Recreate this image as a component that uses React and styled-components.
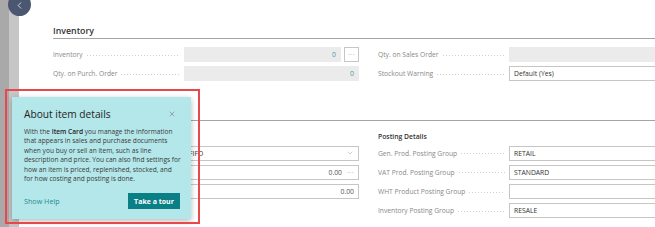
import React from 'react'
import styled, { createGlobalStyle } from 'styled-components'
import { ChevronLeft, ChevronDown, X } from 'lucide-react'

const GlobalStyle = createGlobalStyle`
  html, body { margin: 0; padding: 0; background: #fff; }
  * { box-sizing: border-box; }
`

const Frame = styled.div`
  position: relative;
  width: 655px;
  height: 227px;
  display: flex;
  overflow: hidden;
  font-family: "Open Sans", "Noto Sans", sans-serif;
  color: #333;
`

const Rail = styled.div`
  flex: none;
  width: 19px;
  background: linear-gradient(to right, #a9a9a9 0 9px, #c6c6c6 9px 19px);
`

const Page = styled.main`
  flex: 1;
  min-width: 0;
  background: #fff;
  padding: 24px 0 0 34px;
`

const BackButton = styled.button`
  position: absolute;
  left: 8px;
  top: -7px;
  width: 23px;
  height: 23px;
  border: none;
  border-radius: 50%;
  background: #4b5670;
  color: #fff;
  display: flex;
  align-items: center;
  justify-content: center;
  padding: 1px 0 0 0;
`

const TabHeader = styled.h2`
  margin: ${p => p.$gap || 0}px 0 0;
  height: 15px;
  line-height: 14px;
  font-size: 8.8px;
  font-weight: 600;
  color: #333;
  border-bottom: 1px solid #a4a4a4;
  white-space: nowrap;
`

const Grid = styled.div`
  display: grid;
  grid-template-columns: 306px 306px;
  column-gap: 19px;
  margin-top: ${p => p.$top}px;
`

const Column = styled.div`
  display: flex;
  flex-direction: column;
  gap: 4.3px;
`

const GroupTitle = styled.div`
  height: 10px;
  line-height: 10px;
  font-size: 6.8px;
  font-weight: 600;
  color: #333;
  margin-bottom: -1px;
`

const Row = styled.div`
  display: flex;
  align-items: center;
  height: 15px;
`

const Label = styled.div`
  flex: none;
  width: 131px;
  display: flex;
  align-items: center;
  font-size: 6.7px;
  color: #8a8886;
  white-space: nowrap;
`

const Leader = styled.span`
  flex: 1;
  height: 1px;
  margin: 1px 4px 0 4px;
  background-image: linear-gradient(to right, #cfcfcf 1px, transparent 1px);
  background-size: 3px 1px;
  background-repeat: repeat-x;
`

const Box = styled.div`
  flex: none;
  width: ${p => p.$width || 175}px;
  height: 15px;
  display: flex;
  align-items: center;
  justify-content: ${p => (p.$numeric ? 'flex-end' : 'flex-start')};
  gap: 5px;
  padding: 0 4px;
  font-size: 6.8px;
  white-space: nowrap;
  background: ${p => (p.$readOnly ? '#ebebeb' : '#fff')};
  border: 1px solid ${p => (p.$readOnly ? '#ebebeb' : '#c8c6c4')};
  color: ${p => (p.$readOnly ? '#4a9aa6' : '#333')};
`

const Value = styled.span`
  flex: 1;
  text-align: ${p => (p.$numeric ? 'right' : 'left')};
  color: ${p => (p.$muted ? '#555' : 'inherit')};
`

const Dots = styled.span`
  color: #9a9a9a;
  font-size: 7px;
  letter-spacing: 0.5px;
`

const AssistButton = styled.div`
  flex: none;
  width: 15px;
  height: 15px;
  margin-left: 3px;
  border: 1px solid #c8c6c4;
  background: #fff;
  display: flex;
  align-items: center;
  justify-content: center;
`

const Bubble = styled.section`
  position: absolute;
  left: 12px;
  top: 97px;
  width: 179px;
  height: 122px;
  padding: 10px 11px 0 12px;
  background: #b3e7ea;
  box-shadow: 0 2px 6px rgba(0, 0, 0, 0.28);
  display: flex;
  flex-direction: column;
`

const BubbleHead = styled.div`
  display: flex;
  align-items: center;
  justify-content: space-between;
  height: 14px;
`

const BubbleTitle = styled.h3`
  margin: 0;
  font-size: 10.2px;
  font-weight: 400;
  color: #252423;
  white-space: nowrap;
`

const CloseButton = styled.span`
  display: flex;
  color: #605e5c;
  margin-right: 4px;
`

const BubbleText = styled.p`
  margin: 6px 0 0;
  font-size: 6.6px;
  line-height: 9.4px;
  color: #3b3a39;
  white-space: nowrap;

  b {
    font-weight: 600;
    color: #252423;
  }
`

const BubbleFooter = styled.div`
  display: flex;
  align-items: center;
  justify-content: space-between;
  margin-top: auto;
  margin-bottom: 10px;
`

const HelpLink = styled.a`
  font-size: 7.2px;
  color: #2a8a92;
`

const TourButton = styled.button`
  width: 52px;
  height: 16px;
  border: none;
  padding: 0;
  background: #0a7f86;
  color: #fff;
  font-family: inherit;
  font-size: 7px;
  font-weight: 700;
`

const Highlight = styled.div`
  position: absolute;
  left: 5px;
  top: 89px;
  width: 195px;
  height: 135px;
  border: 2px solid #e8474c;
  pointer-events: none;
`

function Field({ label, children }) {
  return (
    <Row>
      <Label>
        {label}
        <Leader />
      </Label>
      {children}
    </Row>
  )
}

export default function App() {
  return (
    <Frame>
      <GlobalStyle />
      <Rail />
      <Page>
        <TabHeader>Inventory</TabHeader>
        <Grid $top={8}>
          <Column>
            <Field label="Inventory">
              <Box $readOnly $numeric $width={157}>0</Box>
              <AssistButton><Dots>···</Dots></AssistButton>
            </Field>
            <Field label="Qty. on Purch. Order">
              <Box $readOnly $numeric>0</Box>
            </Field>
          </Column>
          <Column>
            <Field label="Qty. on Sales Order">
              <Box $readOnly $numeric />
            </Field>
            <Field label="Stockout Warning">
              <Box>Default (Yes)</Box>
            </Field>
          </Column>
        </Grid>

        <TabHeader $gap={25}>Costs &amp; Posting</TabHeader>
        <Grid $top={11}>
          <Column>
            <GroupTitle>Cost Details</GroupTitle>
            <Field label="Costing Method">
              <Box>
                <Value>FIFO</Value>
                <ChevronDown size={8} color="#a19f9d" strokeWidth={1.5} />
              </Box>
            </Field>
            <Field label="Standard Cost">
              <Box>
                <Value $numeric $muted>0.00</Value>
                <Dots>···</Dots>
              </Box>
            </Field>
            <Field label="Unit Cost">
              <Box $numeric><Value $numeric $muted>0.00</Value></Box>
            </Field>
          </Column>
          <Column>
            <GroupTitle>Posting Details</GroupTitle>
            <Field label="Gen. Prod. Posting Group">
              <Box>RETAIL</Box>
            </Field>
            <Field label="VAT Prod. Posting Group">
              <Box>STANDARD</Box>
            </Field>
            <Field label="WHT Product Posting Group">
              <Box />
            </Field>
            <Field label="Inventory Posting Group">
              <Box>RESALE</Box>
            </Field>
          </Column>
        </Grid>
      </Page>

      <BackButton aria-label="Back">
        <ChevronLeft size={11} strokeWidth={1.6} />
      </BackButton>

      <Bubble>
        <BubbleHead>
          <BubbleTitle>About item details</BubbleTitle>
          <CloseButton><X size={8} strokeWidth={1.4} /></CloseButton>
        </BubbleHead>
        <BubbleText>
          With the <b>Item Card</b> you manage the information<br />
          that appears in sales and purchase documents<br />
          when you buy or sell an item, such as line<br />
          description and price. You can also find settings for<br />
          how an item is priced, replenished, stocked, and<br />
          for how costing and posting is done.
        </BubbleText>
        <BubbleFooter>
          <HelpLink>Show Help</HelpLink>
          <TourButton>Take a tour</TourButton>
        </BubbleFooter>
      </Bubble>
      <Highlight />
    </Frame>
  )
}
